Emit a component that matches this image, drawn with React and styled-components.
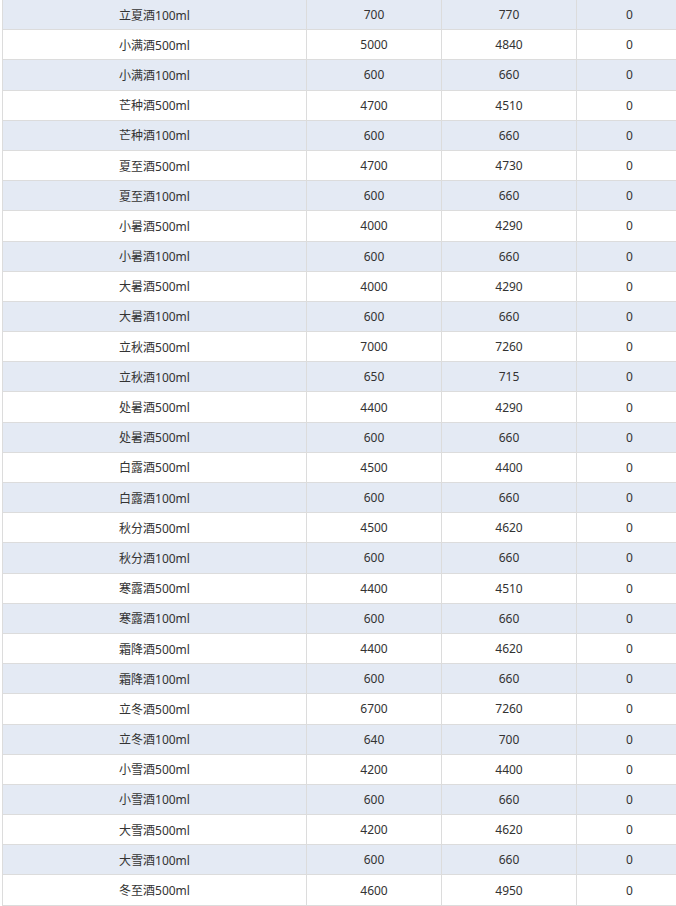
import styled, { createGlobalStyle } from "styled-components";

const rows = [
    ["立夏酒100ml", 700, 770, 0],
    ["小满酒500ml", 5000, 4840, 0],
    ["小满酒100ml", 600, 660, 0],
    ["芒种酒500ml", 4700, 4510, 0],
    ["芒种酒100ml", 600, 660, 0],
    ["夏至酒500ml", 4700, 4730, 0],
    ["夏至酒100ml", 600, 660, 0],
    ["小暑酒500ml", 4000, 4290, 0],
    ["小暑酒100ml", 600, 660, 0],
    ["大暑酒500ml", 4000, 4290, 0],
    ["大暑酒100ml", 600, 660, 0],
    ["立秋酒500ml", 7000, 7260, 0],
    ["立秋酒100ml", 650, 715, 0],
    ["处暑酒500ml", 4400, 4290, 0],
    ["处暑酒500ml", 600, 660, 0],
    ["白露酒500ml", 4500, 4400, 0],
    ["白露酒100ml", 600, 660, 0],
    ["秋分酒500ml", 4500, 4620, 0],
    ["秋分酒100ml", 600, 660, 0],
    ["寒露酒500ml", 4400, 4510, 0],
    ["寒露酒100ml", 600, 660, 0],
    ["霜降酒500ml", 4400, 4620, 0],
    ["霜降酒100ml", 600, 660, 0],
    ["立冬酒500ml", 6700, 7260, 0],
    ["立冬酒100ml", 640, 700, 0],
    ["小雪酒500ml", 4200, 4400, 0],
    ["小雪酒100ml", 600, 660, 0],
    ["大雪酒500ml", 4200, 4620, 0],
    ["大雪酒100ml", 600, 660, 0],
    ["冬至酒500ml", 4600, 4950, 0],
];

const columns = [304, 135, 135, 106];

export default function App() {
    return (
        <>
            <GlobalStyle />
            <Page>
                <Table>
                    <colgroup>
                        {columns.map((w, i) => (
                            <Col key={i} $width={w} />
                        ))}
                    </colgroup>
                    <tbody>
                        {rows.map((row, i) => (
                            <Row key={i} $striped={i % 2 === 0}>
                                {row.map((value, j) => (
                                    <Cell key={j}>{value}</Cell>
                                ))}
                            </Row>
                        ))}
                    </tbody>
                </Table>
            </Page>
        </>
    );
}

const GlobalStyle = createGlobalStyle`
  body {
    margin: 0;
    background: #fff;
    overflow: hidden;
  }
`;

const Page = styled.div`
  width: 676px;
  height: 906px;
  overflow: hidden;
  padding-left: 2px;
  box-sizing: border-box;
`;

const Table = styled.table`
  width: 680px;
  margin-top: -1px;
  border-collapse: collapse;
  table-layout: fixed;
  font-family: "Noto Sans", "Noto Sans CJK SC", sans-serif;
  font-size: 12px;
  color: #333;
`;

const Col = styled.col`
  width: ${(p) => p.$width}px;
`;

const Row = styled.tr`
  height: 30.2px;
  background: ${(p) => (p.$striped ? "#e4eaf4" : "#fff")};
`;

const Cell = styled.td`
  padding: 0;
  border: 1px solid #dcdcdc;
  text-align: center;
  vertical-align: middle;
  white-space: nowrap;
`;
